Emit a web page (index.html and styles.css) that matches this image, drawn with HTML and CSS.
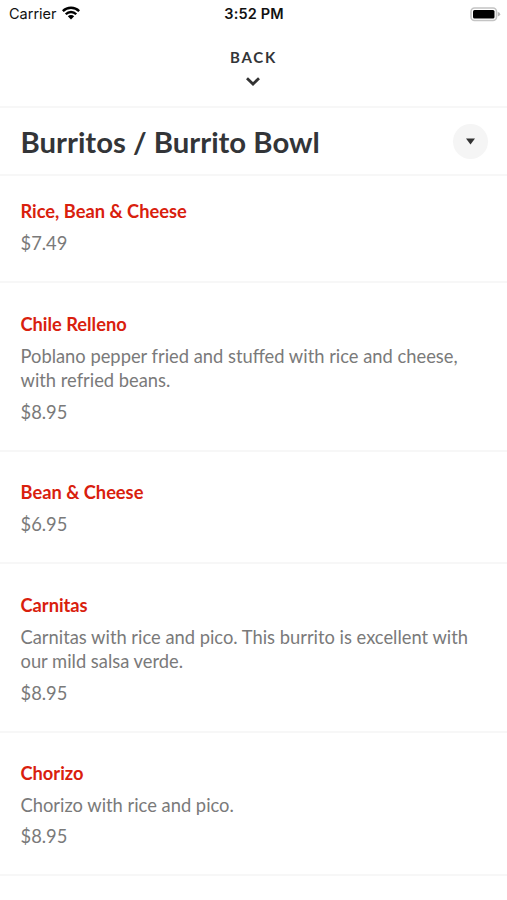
FILE: index.html
```html
<!DOCTYPE html>
<html lang="en">
<head>
<meta charset="utf-8">
<title>Menu</title>
<link rel="stylesheet" href="styles.css">
</head>
<body>
<div class="status">
  <div class="carrier"><span>Carrier</span>
    <svg width="18" height="14" viewBox="0 0 18 14"><path d="M0 4.300a12.800 12.800 0 0 1 18 0L16.300 6.100a10.300 10.300 0 0 0-14.600 0z"/><path d="M2.900 7.400a8.600 8.600 0 0 1 12.200 0L13.400 9.100a6.200 6.200 0 0 0-8.800 0z"/><path d="M5.800 10.300a4.500 4.500 0 0 1 6.400 0L9 13.500z"/></svg>
  </div>
  <div class="time">3:52 PM</div>
  <div class="battery"><svg width="31" height="15" viewBox="0 0 31 15"><rect x="1" y="1" width="25.500" height="12.500" rx="3.500" fill="none" stroke="#c4c4c4" stroke-width="1.600"/><rect x="3" y="3" width="21.500" height="8.500" rx="1.500"/><path d="M27.800 5q2.400.6 2.400 2.200t-2.400 2.200z" fill="#b5b5b5"/></svg></div>
</div>
<header class="back"><span>BACK</span>
  <svg width="14" height="9" viewBox="0 0 14 9"><path d="M1 1.300 7 7l6-5.700" fill="none" stroke="#333" stroke-width="2.800"/></svg>
</header>
<div class="heading"><h1>Burritos / Burrito Bowl</h1>
  <button class="toggle" aria-label="Sections"><svg width="9" height="7" viewBox="0 0 9 7"><path d="M0 .5h9L4.500 6.500z" fill="#333"/></svg></button>
</div>
<main>
<article><h2>Rice, Bean &amp; Cheese</h2><p class="price">$7.49</p></article>
<article><h2>Chile Relleno</h2><p>Poblano pepper fried and stuffed with rice and cheese,<br>with refried beans.</p><p class="price">$8.95</p></article>
<article><h2>Bean &amp; Cheese</h2><p class="price">$6.95</p></article>
<article><h2>Carnitas</h2><p>Carnitas with rice and pico. This burrito is excellent with<br>our mild salsa verde.</p><p class="price">$8.95</p></article>
<article><h2>Chorizo</h2><p>Chorizo with rice and pico.</p><p class="price">$8.95</p></article>
</main>
</body>
</html>
```
FILE: styles.css
```css
* { box-sizing: border-box; }
body { margin: 0; height: 900px; overflow: hidden; background: #fff; font-family: Lato, sans-serif; color: #333538; }
.status { height: 28px; padding: 0 6px 0 9px; display: grid; grid-template-columns: 1fr auto 1fr; align-items: center; font: 14.5px/28px Inter, sans-serif; color: #111; }
.carrier { display: flex; align-items: center; gap: 5px; }
.carrier svg { margin-top: -2px; }
.time { font-weight: 600; letter-spacing: .15px; padding-right: 2px; }
.battery { display: flex; justify-content: flex-end; }
.back { height: 80px; border-bottom: 2px solid #f7f7f7; display: flex; flex-direction: column; align-items: center; padding-top: 19px; font-size: 15px; line-height: 20px; font-weight: 700; letter-spacing: 1.8px; }
.back svg { margin: 10px 1px 0 0; }
.heading { height: 68px; border-bottom: 2px solid #f7f7f7; padding: 0 19px 0 20.5px; display: flex; align-items: center; justify-content: space-between; }
h1 { margin: 2px 0 0; font-size: 29.3px; line-height: 36px; font-weight: 700; }
.toggle { width: 35px; height: 35px; border: 0; padding: 0; border-radius: 50%; background: #f5f5f5; display: flex; align-items: center; justify-content: center; }
article { padding: 28.500px 20.5px 25.500px; border-bottom: 2px solid #f7f7f7; }
article:first-child { padding-top: 23px; padding-bottom: 26px; }
h2 { margin: 0 0 7.400px; font-size: 18.25px; line-height: 24.500px; font-weight: 700; color: #d9200d; }
p { margin: 0 0 7px; font-size: 18.330px; line-height: 24.500px; color: #7a7a7a; white-space: nowrap; }
.price { margin: 0; }
```
